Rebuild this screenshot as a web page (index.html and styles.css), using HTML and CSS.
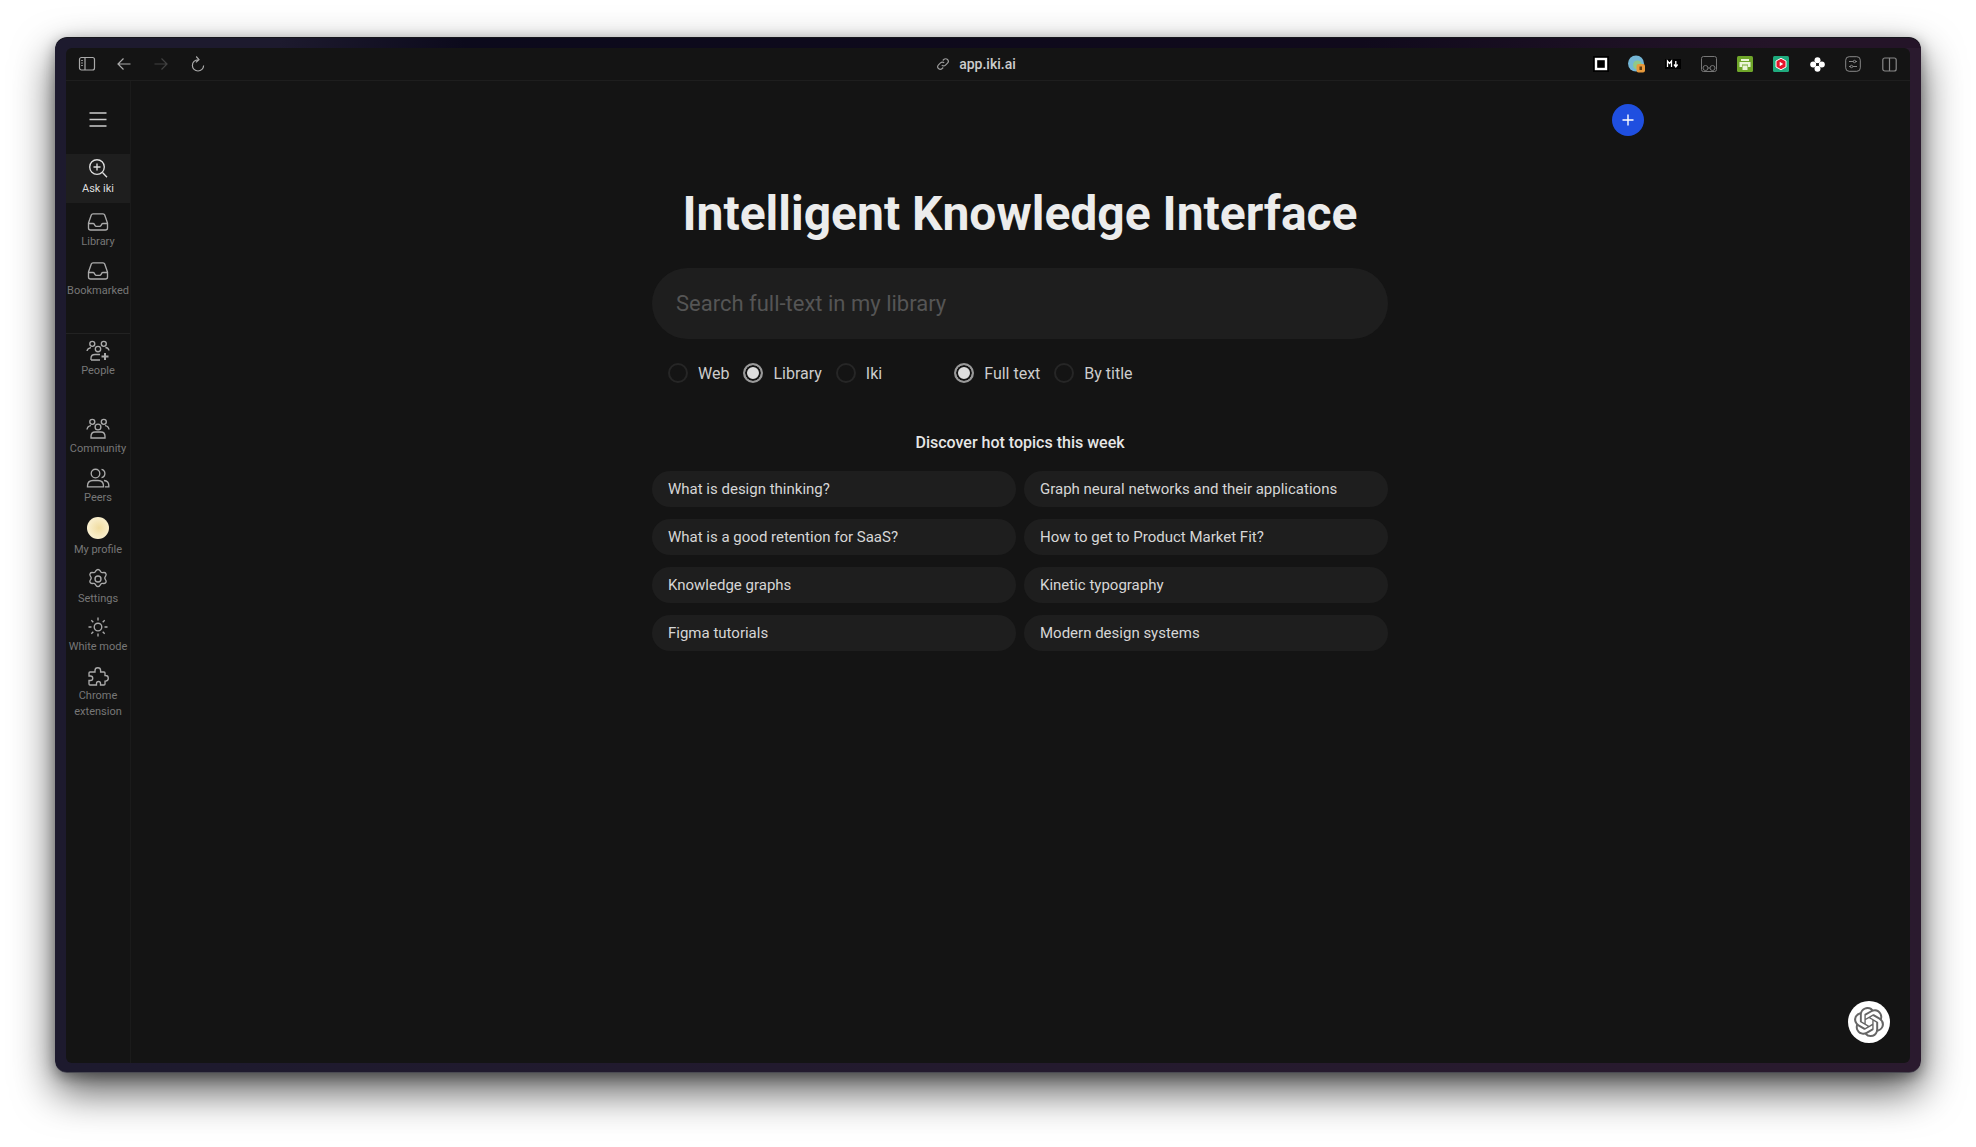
FILE: index.html
```html
<!DOCTYPE html>
<html lang="en">
<head>
<meta charset="utf-8">
<title>Iki</title>
<link rel="stylesheet" href="styles.css">
</head>
<body>
<div class="window">
  <div class="panel">
    <header class="toolbar">
      <div class="tb-left">
        <span class="tb-btn"><svg width="18" height="16" viewBox="0 0 18 16" class="ic"><rect x="1.500" y="1.500" width="15" height="12.500" rx="2"/><path d="M7 1.500V14M3.200 4.500h1.600M3.200 7h1.600M3.200 9.500h1.600"/></svg></span>
        <span class="tb-btn"><svg width="16" height="16" viewBox="0 0 16 16" class="ic"><path d="M14.500 8H2M7.500 2.500 2 8l5.500 5.500"/></svg></span>
        <span class="tb-btn dim"><svg width="16" height="16" viewBox="0 0 16 16" class="ic"><path d="M1.500 8H14M8.500 2.500 14 8l-5.500 5.500"/></svg></span>
        <span class="tb-btn"><svg width="16" height="16" viewBox="0 0 16 16" class="ic"><path d="M8 3.800a5.600 5.600 0 1 0 5.600 5.600M6.200 0.500 9 3.600 5.900 6.400"/></svg></span>
      </div>
      <div class="address">
        <svg width="14" height="14" viewBox="0 0 14 14" class="ic thin"><path d="M5.800 8.200a2.600 2.600 0 0 0 3.700 0l2-2a2.600 2.600 0 0 0-3.700-3.700l-1 1M8.200 5.800a2.600 2.600 0 0 0-3.700 0l-2 2a2.600 2.600 0 0 0 3.700 3.700l1-1"/></svg>
        <span>app.iki.ai</span>
      </div>
      <div class="tb-right">
        <span class="ext"><svg width="16" height="16" viewBox="0 0 16 16"><rect width="16" height="16" fill="#000"/><rect x="3" y="3" width="10" height="10" fill="none" stroke="#fff" stroke-width="2.400"/></svg></span>
        <span class="ext"><svg width="18" height="18" viewBox="0 0 18 18"><circle cx="8" cy="8.500" r="8" fill="#74b6d6"/><circle cx="9.500" cy="10" r="4.500" fill="#8fc98a"/><rect x="8.500" y="9" width="8.500" height="8.500" rx="2" fill="#e89a3c"/><rect x="11.500" y="11.500" width="2.500" height="3.500" fill="#5a3a10"/></svg></span>
        <span class="ext"><svg width="16" height="10" viewBox="0 0 16 10"><rect width="16" height="10" fill="#000"/><path d="M2.500 8V2l2 2.500L6.500 2v6M10.800 2v5.500M9 5.500l1.800 2.500 1.800-2.500" fill="none" stroke="#fff" stroke-width="1.300"/></svg></span>
        <span class="ext"><svg width="16" height="16" viewBox="0 0 16 16" fill="none" stroke="#777"><rect x=".5" y=".5" width="15" height="15" rx="2"/><circle cx="4.500" cy="12" r="2.500"/><circle cx="11.500" cy="12" r="2.500"/><path d="M7 12h2"/></svg></span>
        <span class="ext"><svg width="16" height="16" viewBox="0 0 16 16"><rect width="16" height="16" rx="1.500" fill="#6fa62a"/><path d="M4 3h8v2H4zM2.500 6h11v5H11V8.500H5V11H2.500zM5.500 9.500h5V14h-5z" fill="#eaf5d8"/></svg></span>
        <span class="ext"><svg width="16" height="16" viewBox="0 0 16 16"><rect width="16" height="16" rx="1.500" fill="#1faa7d"/><path d="M8 2.300 13 5v6l-5 2.700L3 11V5z" fill="#e5152b" stroke="#fff"/><path d="M6.700 5.800 10.200 8l-3.500 2.200z" fill="#fff"/></svg></span>
        <span class="ext"><svg width="15" height="15" viewBox="0 0 15 15" fill="#fff"><circle cx="7.500" cy="3.300" r="3"/><circle cx="7.500" cy="11.700" r="3"/><circle cx="3.200" cy="7.500" r="3"/><circle cx="11.800" cy="7.500" r="3"/><circle cx="7.500" cy="7.500" r="1" fill="#141414"/></svg></span>
        <span class="ext"><svg width="16" height="16" viewBox="0 0 16 16" fill="none" stroke="#888"><rect x=".7" y=".7" width="14.600" height="14.600" rx="3.500"/><path d="M4 5.500h4.500M10.500 5.500H12M4 10.500h1.500M8 10.500h4"/><circle cx="9.500" cy="5.500" r="1.200"/><circle cx="6.500" cy="10.500" r="1.200"/></svg></span>
        <span class="ext"><svg width="15" height="15" viewBox="0 0 15 15" fill="none" stroke="#888" stroke-width="1.200"><rect x=".8" y="1" width="13.400" height="13" rx="2"/><path d="M7.500 1v13"/></svg></span>
      </div>
    </header>

    <div class="body">
      <nav class="sidebar">
        <div class="hamburger"><svg width="18" height="15" viewBox="0 0 18 15" fill="none" stroke="#ccc" stroke-width="1.400"><path d="M.5 1h17M.5 7.500h17M.5 14h17"/></svg></div>
        <a class="nav-item active">
          <svg class="nav-ic" viewBox="0 0 24 24"><circle cx="11" cy="11" r="7.300"/><path d="M16.500 16.500 21 21.200M11 7.500v7M7.500 11h7"/></svg>
          <span>Ask iki</span>
        </a>
        <div class="nav-group lib">
          <a class="nav-item">
            <svg class="nav-ic" viewBox="0 0 24 24"><path d="M2.500 13 5.300 5Q5.700 3.800 7 3.800h10q1.300 0 1.700 1.200L21.500 13v5q0 2-2 2h-15q-2 0-2-2zM2.500 13.500H7q1 0 1.500 1l.4.900q.5 1 1.500 1h3.200q1 0 1.500-1l.4-.9q.5-1 1.500-1h4.500"/></svg>
            <span>Library</span>
          </a>
          <a class="nav-item">
            <svg class="nav-ic" viewBox="0 0 24 24"><path d="M2.500 13 5.300 5Q5.700 3.800 7 3.800h10q1.300 0 1.700 1.200L21.500 13v5q0 2-2 2h-15q-2 0-2-2zM2.500 13.500H7q1 0 1.500 1l.4.900q.5 1 1.500 1h3.200q1 0 1.500-1l.4-.9q.5-1 1.500-1h4.500"/></svg>
            <span>Bookmarked</span>
          </a>
        </div>
        <div class="nav-group people">
          <a class="nav-item">
            <svg class="nav-ic" viewBox="0 0 24 24"><circle cx="6.300" cy="4.800" r="2.500"/><circle cx="17.800" cy="4.800" r="2.500"/><circle cx="12" cy="10" r="2.700"/><path d="M1 12q.5-3 4-3.400M23 11.500q-.5-2.700-3.600-3M5 21v-1.800q0-3.700 4-3.700h5M5 21h9"/><path d="M19 14v7M15.500 17.500h7" stroke-width="2"/></svg>
            <span>People</span>
          </a>
        </div>
        <div class="nav-group main-nav">
          <a class="nav-item">
            <svg class="nav-ic" viewBox="0 0 24 24"><circle cx="6.300" cy="4.800" r="2.500"/><circle cx="17.800" cy="4.800" r="2.500"/><circle cx="12" cy="10" r="2.900"/><path d="M1 12.500q.5-3.500 4-3.900M23 12.500q-.5-3.500-4-3.900M5 21q0-1 0-1.500Q5 15 9 15h6q4 0 4 4.500V21zM5 21h14"/></svg>
            <span>Community</span>
          </a>
          <a class="nav-item">
            <svg class="nav-ic" viewBox="0 0 24 24"><circle cx="9.500" cy="7.500" r="4.300"/><path d="M1.500 20.800v-.8q0-5.500 5.500-5.500h5q5.500 0 5.500 5.500v.8zM15.500 3.300a4.300 4.300 0 0 1 0 8.400M18 14.500q4.800.5 4.800 5v1.300H19"/></svg>
            <span>Peers</span>
          </a>
          <a class="nav-item profile">
            <span class="avatar"></span>
            <span>My profile</span>
          </a>
          <a class="nav-item">
            <svg class="nav-ic" viewBox="0 0 24 24"><circle cx="12" cy="12" r="3"/><path d="M12 2.500q1.200 0 2 1.200l.8 1.200q.6.800 1.500.7l1.500-.1q1.500-.1 2.100 1.100.6 1.100-.2 2.400l-.7 1.200q-.5.800 0 1.600l.7 1.200q.8 1.300.2 2.400-.6 1.200-2.100 1.100l-1.500-.1q-.9-.1-1.500.7l-.8 1.200q-.8 1.200-2 1.200t-2-1.200l-.8-1.200q-.6-.8-1.500-.7l-1.500.1q-1.500.1-2.100-1.100-.6-1.100.2-2.400l.7-1.200q.5-.8 0-1.600l-.7-1.200q-.8-1.300-.2-2.400.6-1.200 2.100-1.100l1.500.1q.9.100 1.500-.7l.8-1.200q.8-1.200 2-1.200z"/></svg>
            <span>Settings</span>
          </a>
          <a class="nav-item tight">
            <svg class="nav-ic" viewBox="0 0 24 24"><circle cx="12" cy="12" r="3.800"/><path d="M12 2.500v3M12 18.500v3M2.500 12h3M18.500 12h3M5.300 5.300l2 2M16.700 16.700l2 2M5.300 18.700l2-2M16.700 7.300l2-2"/></svg>
            <span>White mode</span>
          </a>
          <a class="nav-item">
            <svg class="nav-ic" viewBox="0 0 24 24"><path d="M4 8h5V6.500a2.800 2.800 0 0 1 5.600 0V8H18a1 1 0 0 1 1 1v2.500h.5a2.800 2.800 0 0 1 0 5.600H19V20a1 1 0 0 1-1 1h-3.500v-1.500a2 2 0 0 0-4 0V21H4a1 1 0 0 1-1-1v-3.500h1.500a2.200 2.200 0 0 0 0-4.500H3V9a1 1 0 0 1 1-1z"/></svg>
            <span>Chrome extension</span>
          </a>
        </div>
      </nav>

      <main class="main">
        <h1 class="title">Intelligent Knowledge Interface</h1>
        <div class="search">Search full-text in my library</div>
        <div class="options">
          <div class="radio-group">
            <label class="radio"><i class="dot"></i>Web</label>
            <label class="radio on"><i class="dot"></i>Library</label>
            <label class="radio"><i class="dot"></i>Iki</label>
          </div>
          <div class="radio-group">
            <label class="radio on"><i class="dot"></i>Full text</label>
            <label class="radio"><i class="dot"></i>By title</label>
          </div>
        </div>
        <h2 class="discover">Discover hot topics this week</h2>
        <div class="topics">
          <a class="topic">What is design thinking?</a>
          <a class="topic">Graph neural networks and their applications</a>
          <a class="topic">What is a good retention for SaaS?</a>
          <a class="topic">How to get to Product Market Fit?</a>
          <a class="topic">Knowledge graphs</a>
          <a class="topic">Kinetic typography</a>
          <a class="topic">Figma tutorials</a>
          <a class="topic">Modern design systems</a>
        </div>
        <button class="add"><svg width="14" height="14" viewBox="0 0 14 14" fill="none" stroke="#fff" stroke-width="1.400"><path d="M7 1.500v11M1.500 7h11"/></svg></button>
        <button class="gpt"><svg width="30" height="30" viewBox="0 0 24 24" fill="#666"><path d="M22.2819 9.8211a5.9847 5.9847 0 0 0-.5157-4.9108 6.0462 6.0462 0 0 0-6.5098-2.9A6.0651 6.0651 0 0 0 4.9807 4.1818a5.9847 5.9847 0 0 0-3.9977 2.9 6.0462 6.0462 0 0 0 .7427 7.0966 5.98 5.98 0 0 0 .511 4.9107 6.051 6.051 0 0 0 6.5146 2.9001A5.9847 5.9847 0 0 0 13.2599 24a6.0557 6.0557 0 0 0 5.7718-4.2058 5.9894 5.9894 0 0 0 3.9977-2.9001 6.0557 6.0557 0 0 0-.7475-7.0729zm-9.022 12.6081a4.4755 4.4755 0 0 1-2.8764-1.0408l.1419-.0804 4.7783-2.7582a.7948.7948 0 0 0 .3927-.6813v-6.7369l2.02 1.1686a.071.071 0 0 1 .038.052v5.5826a4.504 4.504 0 0 1-4.4945 4.4944zm-9.6607-4.1254a4.4708 4.4708 0 0 1-.5346-3.0137l.142.0852 4.783 2.7582a.7712.7712 0 0 0 .7806 0l5.8428-3.3685v2.3324a.0804.0804 0 0 1-.0332.0615L9.74 19.9502a4.4992 4.4992 0 0 1-6.1408-1.6464zM2.3408 7.8956a4.485 4.485 0 0 1 2.3655-1.9728V11.6a.7664.7664 0 0 0 .3879.6765l5.8144 3.3543-2.0201 1.1685a.0757.0757 0 0 1-.071 0l-4.8303-2.7865A4.504 4.504 0 0 1 2.3408 7.872zm16.5963 3.8558L13.1038 8.364 15.1192 7.2a.0757.0757 0 0 1 .071 0l4.8303 2.7913a4.4944 4.4944 0 0 1-.6765 8.1042v-5.6772a.79.79 0 0 0-.407-.667zm2.0107-3.0231l-.142-.0852-4.7735-2.7818a.7759.7759 0 0 0-.7854 0L9.409 9.2297V6.8974a.0662.0662 0 0 1 .0284-.0615l4.8303-2.7866a4.4992 4.4992 0 0 1 6.6802 4.66zM8.3065 12.863l-2.02-1.1638a.0804.0804 0 0 1-.038-.0567V6.0742a4.4992 4.4992 0 0 1 7.3757-3.4537l-.142.0805L8.704 5.459a.7948.7948 0 0 0-.3927.6813zm1.0976-2.3654l2.602-1.4998 2.6069 1.4998v2.9994l-2.5974 1.4997-2.6067-1.4997Z"/></svg></button>
      </main>
    </div>
  </div>
</div>
</body>
</html>
```

FILE: styles.css
```css
* { box-sizing: border-box; }
html, body { margin: 0; height: 1147px; overflow: hidden; }
body {
  background: #fff;
  padding: 37px 55px 74px;
  font-family: Roboto, "Liberation Sans", sans-serif;
  color: #ddd;
}
.window {
  height: 1036px;
  padding: 11px 11px 10px;
  border-radius: 12px;
  background:
    linear-gradient(90deg, #1d1a2e 0, #1d1a2e 12%, #0c0a1c 22%, #100a1c 70%, #241428 92%) top / 100% 11px no-repeat,
    linear-gradient(90deg, #1d1a2e 0%, #2a1a2e 100%);
  box-shadow: inset 0 1px 0 #16161c, inset 0 -1px 0 #4a4a52, 0 18px 42px rgba(0,0,0,.66), 0 4px 14px rgba(0,0,0,.35);
}
.panel {
  height: 100%;
  background: #141414;
  border-radius: 6px;
  display: flex;
  flex-direction: column;
  overflow: hidden;
}
.toolbar {
  height: 33px;
  flex: none;
  border-bottom: 1px solid #1e1e1e;
  display: grid;
  grid-template-columns: 1fr auto 1fr;
  align-items: center;
}
.tb-left { display: flex; padding-left: 2px; }
.tb-btn { width: 37px; height: 24px; display: flex; align-items: center; justify-content: center; }
.tb-btn.dim { opacity: .3; }
.ic { fill: none; stroke: #aaa; stroke-width: 1.200; }
.ic.thin { stroke: #999; }
.address {
  display: flex;
  align-items: center;
  gap: 9px;
  font-size: 14px;
  font-weight: 500;
  color: #ccc;
  position: relative;
  left: -12px;
}
.tb-right { display: flex; justify-content: flex-end; padding-right: 3px; }
.ext { width: 36px; height: 24px; display: flex; align-items: center; justify-content: center; }
.body { flex: 1; display: flex; min-height: 0; }
.sidebar {
  width: 65px;
  margin-right: -1px;
  flex: none;
  border-right: 1px solid #1b1b1b;
  display: flex;
  flex-direction: column;
}
.hamburger { height: 73px; display: flex; align-items: center; justify-content: center; flex: none; padding-top: 3px; }
.nav-item {
  display: flex;
  flex-direction: column;
  align-items: center;
  text-align: center;
  width: 64px;
  font-size: 11px;
  line-height: 16px;
  color: #777;
}
.nav-item.active { height: 49px; padding-top: 2px; background: #1e1e1e; color: #ddd; }
.nav-item.active span { margin-top: 1px; }
.nav-item.active .nav-ic { stroke: #ddd; }
.nav-item.tight { margin-top: -1px; }
.nav-ic { width: 24px; height: 24px; flex: none; fill: none; stroke: #aaa; stroke-width: 1.350; }
.nav-group { display: flex; flex-direction: column; gap: 9px; }
.nav-group.lib { padding-top: 7px; }
.nav-group.people { margin-top: 34px; padding-top: 5px; border-top: 1px solid #222; width: 64px; }
.nav-group.main-nav { margin-top: 38px; }
.avatar {
  width: 22px; height: 22px; margin: 2px 0 3px; border-radius: 50%; flex: none;
  background: radial-gradient(circle at 55% 50%, #f0dca0 0, #f8ecc6 55%, #fff7e0 100%);
}
.main {
  flex: 1;
  min-width: 0;
  display: flex;
  flex-direction: column;
  align-items: center;
  padding-top: 106px;
  position: relative;
}
.title { margin: 0; font-size: 48px; line-height: 54px; font-weight: 700; color: #ececec; }
.search {
  width: 736px;
  height: 71px;
  margin-top: 27px;
  padding: 0 0 1px 24px;
  border-radius: 36px;
  background: #1e1e1e;
  display: flex;
  align-items: center;
  font-size: 22px;
  color: #555;
}
.options { width: 736px; margin-top: 24px; padding-left: 16px; display: flex; gap: 72px; }
.radio-group { display: flex; gap: 14px; }
.radio { display: flex; align-items: center; gap: 10px; height: 20px; font-size: 16px; color: #ccc; }
.dot { width: 20px; height: 20px; border-radius: 50%; border: 2px solid #262626; flex: none; }
.radio.on .dot { border-color: #999; background: #ddd; box-shadow: inset 0 0 0 2px #141414; }
.discover { margin: 50px 0 18px; font-size: 16px; line-height: 20px; font-weight: 500; color: #e6e6e6; }
.topics { width: 736px; display: grid; grid-template-columns: 1fr 1fr; gap: 12px 8px; }
.topic {
  height: 36px;
  padding-left: 16px;
  border-radius: 18px;
  background: #1e1e1e;
  display: flex;
  align-items: center;
  font-size: 15px;
  color: #d6d6d6;
}
.add {
  position: absolute;
  left: 1482px;
  top: 23px;
  width: 32px;
  height: 32px;
  padding: 0;
  border: 0;
  border-radius: 50%;
  background: #1f4fe0;
  display: flex;
  align-items: center;
  justify-content: center;
}
.gpt {
  position: absolute;
  right: 20px;
  top: 920px;
  width: 42px;
  height: 42px;
  padding: 0;
  border: 0;
  border-radius: 50%;
  background: #fff;
  display: flex;
  align-items: center;
  justify-content: center;
}
```
